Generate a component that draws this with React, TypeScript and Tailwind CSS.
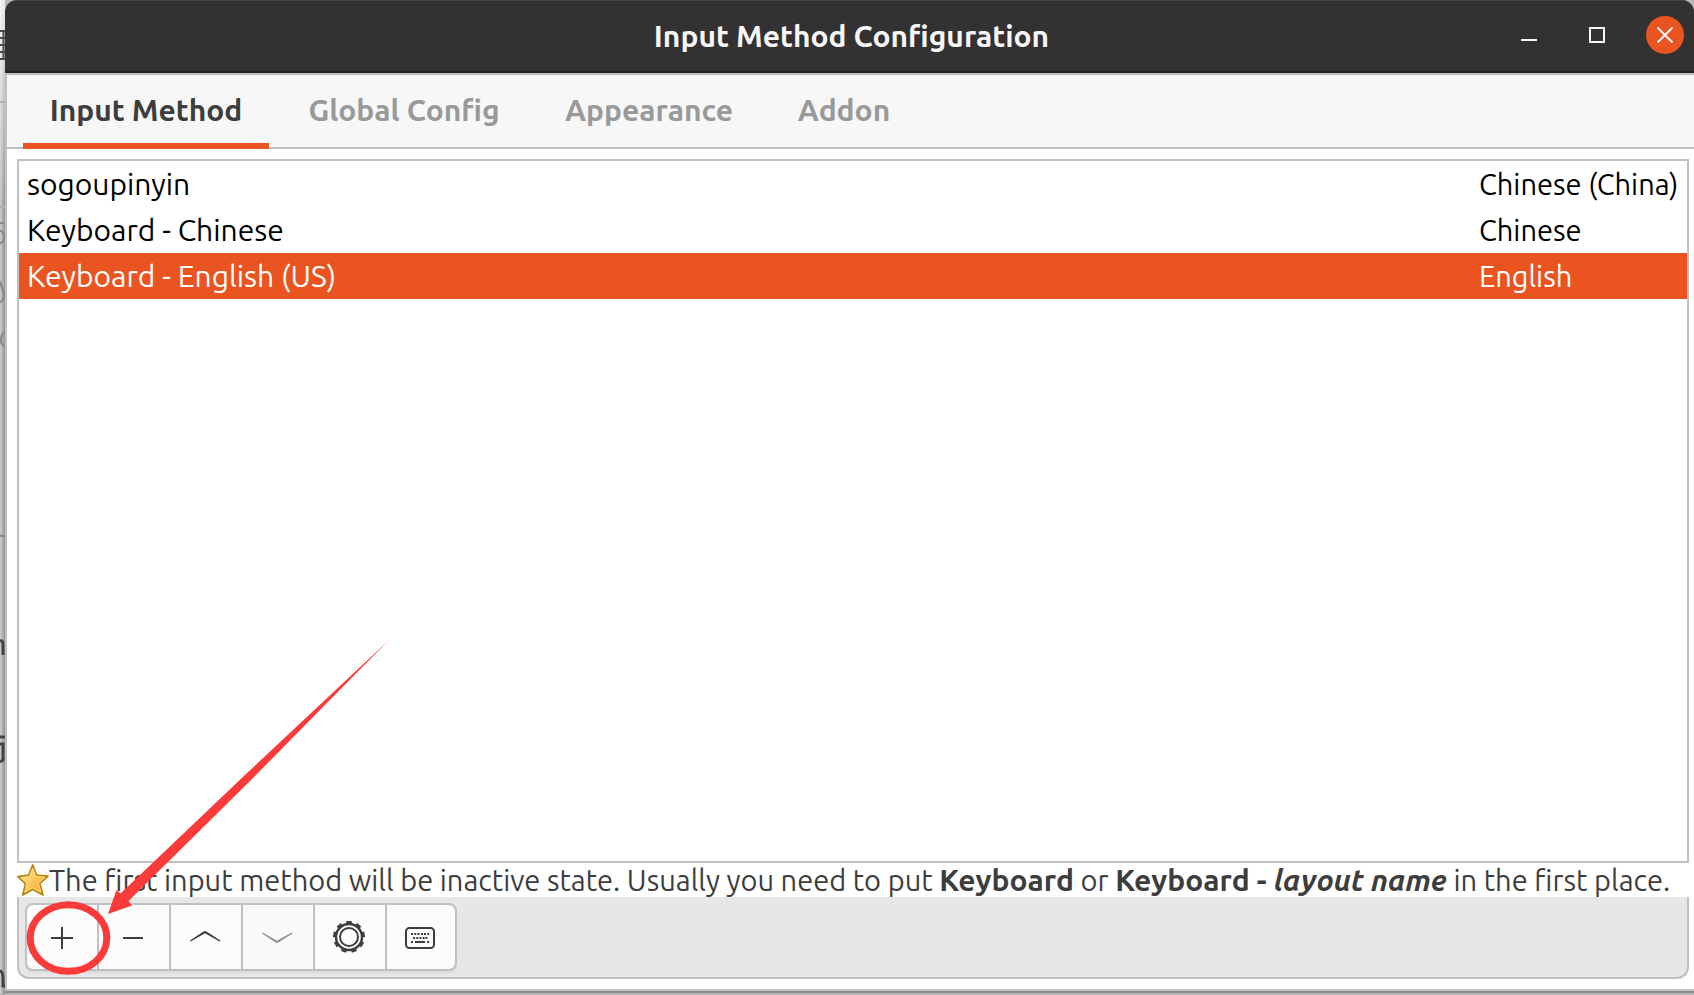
import React, { useState } from 'react';
import { clsx } from 'clsx';

const tabs = [
  { name: 'Input Method', width: 'w-[246px]' },
  { name: 'Global Config', width: 'w-[238px]' },
  { name: 'Appearance', width: 'w-[220px]' },
  { name: 'Addon', width: 'w-[138px]' },
];

const inputMethods = [
  { name: 'sogoupinyin', language: 'Chinese (China)' },
  { name: 'Keyboard - Chinese', language: 'Chinese' },
  { name: 'Keyboard - English (US)', language: 'English' },
];

const PlusIcon = () => (
  <svg width="32" height="32" viewBox="0 0 32 32" stroke="#3d3d3d" strokeWidth="2" aria-hidden="true">
    <path d="M5 16H27M16 5V27" />
  </svg>
);

const MinusIcon = () => (
  <svg width="32" height="32" viewBox="0 0 32 32" stroke="#3d3d3d" strokeWidth="2" aria-hidden="true">
    <path d="M5 16H25" />
  </svg>
);

const UpIcon = () => (
  <svg width="32" height="32" viewBox="1 0 32 32" fill="#3d3d3d" aria-hidden="true">
    <path d="M1 18.400 14.600 9.400Q16 8.600 17.400 9.400L31.500 18.400 30.600 19.400 16 11.300 1.600 19.400Z" />
  </svg>
);

const DownIcon = () => (
  <svg width="32" height="32" viewBox="1 0 32 32" fill="#929292" aria-hidden="true">
    <path d="M1 11.600 14.600 20.600Q16 21.400 17.400 20.600L31.500 11.600 30.600 10.600 16 18.700 1.600 10.600Z" />
  </svg>
);

const GearIcon = () => (
  <svg width="34" height="34" viewBox="0 0 34 34" fill="none" stroke="#3d3d3d" aria-hidden="true">
    <circle cx="16" cy="16" r="13" strokeWidth="2.400" />
    <circle cx="16" cy="16" r="9" strokeWidth="2" />
    {[0, 40, 80, 120, 160, 200, 240, 280, 320].map((angle) => (
      <path key={angle} d="M13.300 1.800H18.700" strokeWidth="3.400" transform={`rotate(${angle} 16 16)`} />
    ))}
  </svg>
);

const KeyboardIcon = () => (
  <svg width="32" height="32" viewBox="1 0 32 32" fill="#3d3d3d" aria-hidden="true">
    <rect x="2" y="6" width="28" height="20" rx="3.500" fill="none" stroke="#3d3d3d" strokeWidth="2" />
    <path d="M7 11h2v2H7zM10.300 11h2v2h-2zM13.500 11h2v2h-2zM17 11h2v2h-2zM20 11h2v2h-2zM23.200 11h2v2h-2z" />
    <path d="M9 15h2v2H9zM12.300 15h2v2h-2zM15.500 15h2v2h-2zM18.600 15h2v2h-2zM21.500 15h2v2h-2z" />
    <path d="M7 19h2v2H7zM11 19h10v2H11zM23.200 19h2v2h-2z" />
  </svg>
);

const StarIcon = () => (
  <svg width="32" height="32" viewBox="0 0 32 32" className="shrink-0" aria-hidden="true">
    <defs>
      <linearGradient id="star" x1="0" y1="0" x2="1" y2="1">
        <stop offset="0" stopColor="#fff3c4" />
        <stop offset="0.500" stopColor="#fdc85a" />
        <stop offset="1" stopColor="#fb9620" />
      </linearGradient>
    </defs>
    <path
      d="M15.700 1 19.800 11.200 31 12.100 22.800 19.600 26 31 15.700 25.600 5.700 31 8.500 19.600.8 12.600 11.600 11.200Z"
      fill="url(#star)"
      stroke="#b9850c"
      strokeWidth="1.700"
      strokeLinejoin="round"
    />
    <path
      d="M15.700 4.500 18.800 12.500 28 13.300 21.300 19.300 23.900 28 15.700 23.700 7.800 28 10.100 19.200 4 13.700 12.400 12.600Z"
      fill="none"
      stroke="#ffdf8a"
      strokeWidth="0.900"
    />
  </svg>
);

const actions = [
  { label: 'Add input method', icon: PlusIcon, disabled: false },
  { label: 'Remove input method', icon: MinusIcon, disabled: false },
  { label: 'Move up', icon: UpIcon, disabled: false },
  { label: 'Move down', icon: DownIcon, disabled: true },
  { label: 'Configure', icon: GearIcon, disabled: false },
  { label: 'Keyboard layout', icon: KeyboardIcon, disabled: false },
];

// Sliver of the window lying behind the dialog
const BackdropEdge = () => (
  <div className="w-[5px] shrink-0 bg-linear-to-r from-[#cfcfcf] to-[#939393]">
    <svg width="5" height="995" viewBox="0 0 5 995" fill="none" aria-hidden="true">
      <defs>
        <linearGradient id="edge" x1="0" y1="0" x2="0" y2="1">
          <stop offset="0" stopColor="#fff" stopOpacity="0.800" />
          <stop offset="1" stopColor="#fff" stopOpacity="0" />
        </linearGradient>
      </defs>
      <rect width="5" height="200" fill="url(#edge)" />
      <path d="M0 31H5M0 38H5M0 45H5M0 52H5M0 59H5M3.500 31V60" stroke="#4a4a4a" strokeWidth="2" />
      <path d="M0 102H5M0 207H5" stroke="#b0b0b0" strokeWidth="2" />
      <path d="M0 223H4M0 231Q4 231 4 237T0 243" stroke="#8c8686" strokeWidth="2" />
      <path d="M0 281 4 295M4 292Q4 301 0 302" stroke="#8c8686" strokeWidth="2" />
      <path d="M5 332Q1 334 1 340T5 346" stroke="#8c8686" strokeWidth="2" />
      <path d="M0 536Q3 535 5 537" stroke="#8c8686" strokeWidth="2" />
      <path d="M0 641Q3 640 3 645V655M0 737H5M0 744H3V760L0 762M0 971Q3 971 3 980V986H5" stroke="#444" strokeWidth="3" />
    </svg>
  </div>
);

const Annotation = () => (
  <svg
    className="pointer-events-none absolute bottom-0 left-0"
    width="400"
    height="375"
    viewBox="0 620 400 375"
    aria-hidden="true"
  >
    <ellipse cx="68.500" cy="938" rx="38.300" ry="33.300" fill="none" stroke="#fb3a3a" strokeWidth="7" />
    <path d="M389 640 246 774 120.500 893.500 116.500 890 108 914 132 905.500 128.500 901 251 780Z" fill="#fb3a3a" />
  </svg>
);

export default function App() {
  const [activeTab, setActiveTab] = useState('Input Method');
  const [selected, setSelected] = useState(2);

  return (
    <div className="relative flex h-screen overflow-hidden bg-[#b8b8b8] font-['Ubuntu','Noto_Sans',sans-serif] text-[30px] text-[#3d3d3d]">
      <BackdropEdge />
      <div className="flex min-w-0 flex-1 flex-col border-b-2 border-[#b5b5b5]">
        <main className="flex flex-1 flex-col overflow-hidden rounded-t-xl border-b-2 border-[#8a8a8a]">
          {/* Title bar */}
          <header className="flex h-[73px] shrink-0 items-center border-t border-b-2 border-t-[#474747] border-b-[#222] bg-[#333132] pr-[10px] text-[#f7f7f7]">
            <div className="w-[188px]" />
            <h1 className="flex-1 text-center font-bold">Input Method Configuration</h1>
            <div className="flex items-center gap-[30px] pb-[2px]">
              <button aria-label="Minimize" className="flex size-[38px] items-center justify-center">
                <svg width="16" height="16" stroke="currentColor" strokeWidth="2">
                  <path d="M0 13H16" />
                </svg>
              </button>
              <button aria-label="Maximize" className="flex size-[38px] items-center justify-center">
                <svg width="16" height="16" fill="none" stroke="currentColor" strokeWidth="2">
                  <path d="M1 1H15V15H1Z" />
                </svg>
              </button>
              <button aria-label="Close" className="flex size-[38px] items-center justify-center rounded-full bg-[#e95420]">
                <svg width="16" height="16" stroke="currentColor" strokeWidth="2">
                  <path d="M.5.5 15.500 15.500M15.500.5.5 15.500" />
                </svg>
              </button>
            </div>
          </header>

          <div className="flex flex-1 flex-col border-y-2 border-l-2 border-[#c0c0c0] bg-white">
            {/* Tabs */}
            <nav role="tablist" className="flex h-[74px] shrink-0 gap-4 border-b-2 border-[#c0c0c0] bg-[#f7f7f7] pl-4">
              {tabs.map((tab) => (
                <button
                  key={tab.name}
                  role="tab"
                  aria-selected={activeTab === tab.name}
                  onClick={() => setActiveTab(tab.name)}
                  className={clsx(
                    'h-[74px] border-b-6 pt-[2px] font-bold whitespace-nowrap',
                    tab.width,
                    activeTab === tab.name ? 'border-[#e95420] text-[#3d3d3d]' : 'border-transparent text-[#999]',
                  )}
                >
                  {tab.name}
                </button>
              ))}
            </nav>

            <div className="flex flex-1 flex-col pt-[10px] pr-[5px] pb-[10px] pl-[10px]">
              {/* Input method list */}
              <div className="flex-1 border-2 border-[#c0c0c0] bg-white">
                <table className="w-full text-black">
                  <tbody>
                    {inputMethods.map((method, index) => (
                      <tr
                        key={method.name}
                        onClick={() => setSelected(index)}
                        className={clsx('h-[46px]', selected === index && 'bg-[#e95420] text-white')}
                      >
                        <td className="p-0 pl-2 leading-[46px]">{method.name}</td>
                        <td className="w-[208px] p-0 text-[29px] leading-[46px] whitespace-nowrap">{method.language}</td>
                      </tr>
                    ))}
                  </tbody>
                </table>
              </div>

              {/* Hint */}
              <div className="flex h-[34px] shrink-0 items-center">
                <StarIcon />
                <p className="text-[29px] leading-[34px] whitespace-nowrap">
                  The first input method will be inactive state. Usually you need to put{' '}
                  <b className="text-[30px]">Keyboard</b> or{' '}
                  <b className="text-[30px]">
                    Keyboard - <i>layout name</i>
                  </b>{' '}
                  in the first place.
                </p>
              </div>

              {/* Toolbar */}
              <div className="flex h-[82px] shrink-0 rounded-b-xl border-2 border-t-0 border-[#c0c0c0] bg-[#e7e7e7] px-[6px] pt-[6px]">
                <div role="toolbar" className="flex h-[68px] overflow-hidden rounded-lg border-2 border-[#c0c0c0] bg-[#fcfcfc] shadow-[0_2px_0_#dcdcdc]">
                  {actions.map(({ label, icon: Icon, disabled }) => (
                    <button
                      key={label}
                      aria-label={label}
                      disabled={disabled}
                      className="flex w-[72px] items-center justify-center border-r-2 border-[#c0c0c0] pt-[2px] last:w-[68px] last:border-r-0 disabled:bg-[#fafafa]"
                    >
                      <Icon />
                    </button>
                  ))}
                </div>
              </div>
            </div>
          </div>
        </main>
      </div>
      <Annotation />
    </div>
  );
}
